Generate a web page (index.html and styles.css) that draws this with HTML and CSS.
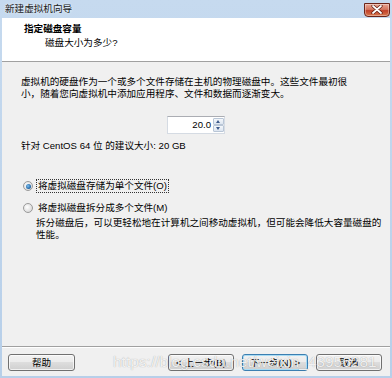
FILE: index.html
```html
<!DOCTYPE html>
<html lang="zh-CN">
<head>
<meta charset="utf-8">
<title>新建虚拟机向导</title>
<link rel="stylesheet" href="styles.css">
</head>
<body>
<div class="window">
	<div class="titlebar">
		<span class="title">新建虚拟机向导</span>
		<span class="close">
			<svg width="12" height="9" viewBox="0 0 12 9">
				<path d="M2 1 L10 8 M10 1 L2 8" stroke="#5a1a10" stroke-width="3.2" stroke-linecap="round"/>
				<path d="M2 1 L10 8 M10 1 L2 8" stroke="#fff" stroke-width="1.8" stroke-linecap="round"/>
			</svg>
		</span>
	</div>
	<div class="client">
		<div class="header">
			<div class="h_title">指定磁盘容量</div>
			<div class="h_sub">磁盘大小为多少?</div>
		</div>
		<div class="content">
			<p class="intro">虚拟机的硬盘作为一个或多个文件存储在主机的物理磁盘中。这些文件最初很<br>小，随着您向虚拟机中添加应用程序、文件和数据而逐渐变大。</p>
			<div class="size_row">
				<div class="spinner">
					<span class="spin_value">20.0</span>
					<div class="spin_btns">
						<span class="spin_up"></span>
						<span class="spin_down"></span>
					</div>
				</div>
			</div>
			<p class="hint">针对 CentOS 64 位 的建议大小: 20 GB</p>
			<div class="options">
				<div class="radio on"><span class="dot"></span><span class="label focus">将虚拟磁盘存储为单个文件(O)</span></div>
				<div class="radio"><span class="dot"></span><span class="label">将虚拟磁盘拆分成多个文件(M)</span></div>
				<p class="desc">拆分磁盘后，可以更轻松地在计算机之间移动虚拟机，但可能会降低大容量磁盘的<br>性能。</p>
			</div>
		</div>
		<div class="footer">
			<span class="btn">帮助</span>
			<div class="btn_group">
				<span class="btn">&lt; 上一步(B)</span>
				<span class="btn default">下一步(N) &gt;</span>
				<span class="btn">取消</span>
			</div>
		</div>
		<div class="watermark">https://blog.csdn.net/weixin_43956281</div>
	</div>
</div>
</body>
</html>
```

FILE: styles.css
```css
* {margin:0; padding:0; box-sizing:border-box}
body {width:392px; height:378px; overflow:hidden; background:#fff;}

.window {
	width:392px;
	height:378px;
	display:flex;
	flex-direction:column;
	background:linear-gradient(#c6daef, #b7cfe9);
	padding:0 2px 2px 2px;
	font-family:"Liberation Sans", "Noto Sans CJK SC", sans-serif;
	font-size:9.6px;
	line-height:12px;
	color:#000;
}

/* 타이틀바 */
.titlebar {
	height:18px;
	display:flex;
	align-items:center;
	justify-content:space-between;
	padding-left:3px;
}
.title {
	color:#1a1a1a;
	text-shadow:0 0 3px rgba(255,255,255,0.9);
}
.close {
	width:26px;
	height:14px;
	margin-top:1px;
	display:flex;
	align-items:center;
	justify-content:center;
	border:1px solid #6b2419;
	border-radius:0 0 4px 4px;
	background:linear-gradient(#e9a592, #d3765f 45%, #c1412a 55%, #d8794f);
	box-shadow:inset 0 0 0 1px rgba(255,255,255,0.35);
}

.client {
	position:relative;
	flex:1;
	display:flex;
	flex-direction:column;
	background:#f0f0f0;
}

/* 헤더 */
.header {
	height:44px;
	background:#fff;
	border-bottom:1px solid #a0a0a0;
	padding:5px 0 0 22px;
}
.h_title {font-weight:bold;}
.h_sub {margin:2px 0 0 21px;}

/* 내용 */
.content {
	flex:1;
	padding:14px 19px 0 19px;
	white-space:nowrap;
}
.size_row {
	display:flex;
	justify-content:center;
	margin-top:16px;
}
.spinner {
	width:58px;
	height:18px;
	display:flex;
	background:#fff;
	border:1px solid #d5dbe3;
	border-top-color:#abadb3;
}
.spin_value {
	flex:1;
	text-align:right;
	padding-right:2px;
	line-height:16px;
}
.spin_btns {
	width:11px;
	display:flex;
	flex-direction:column;
	padding:1px 0;
}
.spin_btns > span {
	flex:1;
	position:relative;
	border:1px solid #b9c6d6;
	border-radius:1px;
	background:linear-gradient(#f4f7fb, #dce5f0);
}
.spin_btns > span::after {
	content:"";
	position:absolute;
	left:2px;
	top:1px;
	border-left:2.5px solid transparent;
	border-right:2.5px solid transparent;
}
.spin_up::after {border-bottom:3px solid #3d5a8a;}
.spin_down::after {border-top:3px solid #3d5a8a;}

.hint {margin-top:6px;}

.options {margin-top:27px;}
.radio {
	display:flex;
	align-items:center;
	height:14px;
	margin-left:2px;
}
.radio + .radio {margin-top:8px;}
.dot {
	width:10px;
	height:10px;
	border-radius:50%;
	border:1px solid #9a9a9a;
	background:radial-gradient(circle at 40% 40%, #fff, #e2e2e2 60%, #cfcfcf);
	margin-right:3px;
	display:flex;
	align-items:center;
	justify-content:center;
}
.radio.on .dot::after {
	content:"";
	width:5px;
	height:5px;
	border-radius:50%;
	background:radial-gradient(circle at 40% 40%, #7fc0f0, #1b5f9f 70%);
}
.label {padding:0 1px; border:1px dotted transparent; line-height:12px;}
.label.focus {border-color:#333;}
.desc {
	margin:2px 0 0 15px;
}

/* 하단 버튼 */
.footer {
	height:30px;
	border-top:1px solid #a0a0a0;
	box-shadow:inset 0 1px 0 #fff;
	display:flex;
	justify-content:space-between;
	padding:7px 8px 0 6px;
}
.btn_group {display:flex; gap:8px;}
.btn {
	width:67px;
	height:17px;
	display:flex;
	align-items:center;
	justify-content:center;
	border:1px solid #707070;
	border-radius:3px;
	background:linear-gradient(#f2f2f2, #ebebeb 50%, #dddddd 50%, #cfcfcf);
	box-shadow:inset 0 0 0 1px rgba(255,255,255,0.7);
}
.btn_group .btn {width:66px;}
.btn.default {
	border-color:#3c7fb1;
	box-shadow:inset 0 0 0 1px #a8dcf5;
}

.watermark {
	position:absolute;
	left:111px;
	top:335px;
	font-size:15.5px;
	line-height:18px;
	color:rgba(255,255,255,0.85);
	text-shadow:0 0 1px rgba(0,0,0,0.35);
	pointer-events:none;
	white-space:nowrap;
}
```
